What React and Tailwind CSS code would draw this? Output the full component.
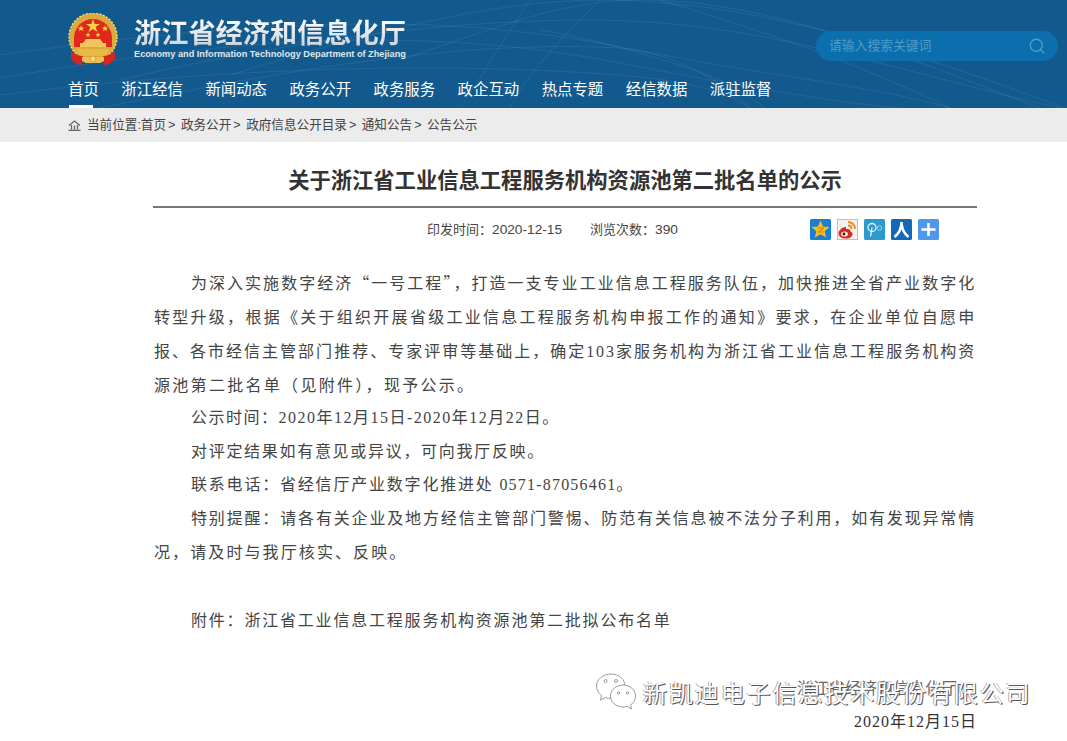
import { Search } from 'lucide-react';

const navItems = ['首页', '浙江经信', '新闻动态', '政务公开', '政务服务', '政企互动', '热点专题', '经信数据', '派驻监督'];
const crumbs = ['政务公开', '政府信息公开目录', '通知公告', '公告公示'];

/* ---------- drawn pieces ---------- */
function Emblem() {
  return (
    <svg width="50" height="53" viewBox="0 0 50 53" className="shrink-0">
      <circle cx="25" cy="24" r="24" fill="#dca93c" />
      <circle cx="25" cy="24" r="24" fill="none" stroke="#f3d77f" strokeWidth="1.5" strokeDasharray="2 1.5" />
      <path d="M6 25a19 19 0 1 1 38 0v9H6z" fill="#e0281d" />
      <path d="M25 6l1.7 5h5.3l-4.3 3 1.6 5-4.3-3.1-4.3 3.1 1.6-5-4.3-3h5.3z" fill="#f8d24a" />
      <path d="M13 12l.9 2.4h2.5l-2 1.5.8 2.4-2.2-1.5-2.1 1.5.8-2.4-2-1.5h2.5zM37 12l.9 2.4h2.5l-2 1.5.8 2.4-2.2-1.5-2.1 1.5.8-2.4-2-1.5h2.5zM20 19l.7 1.9h2l-1.6 1.2.6 2-1.7-1.2-1.7 1.2.6-2-1.6-1.2h2zM30 19l.7 1.9h2l-1.6 1.2.6 2-1.7-1.2-1.7 1.2.6-2-1.6-1.2h2z" fill="#f8d24a" />
      <path d="M15 30l3-4h14l3 4zM12 34h26v-4H12z" fill="#f0c65a" />
      <path d="M8 36h34l-4 7H12z" fill="#e8b945" />
      <path d="M3 38c4 3 8 5 12 5l-1 9c-5 0-9-3-11-7zM47 38c-4 3-8 5-12 5l1 9c5 0 9-3 11-7z" fill="#d9251c" />
      <path d="M14 44h22v4l-4 2H18l-4-2z" fill="#edc050" />
      <circle cx="25" cy="46" r="3" fill="#f3d77f" stroke="#c6902c" strokeWidth=".7" />
    </svg>
  );
}

function HeaderLines() {
  return (
    <svg className="absolute inset-0 h-full w-full" viewBox="0 0 1067 108" preserveAspectRatio="none" fill="none" stroke="#ffffff" strokeOpacity=".07">
      <path d="M0 78c180-30 390-60 620-15 130 25 220 40 280 45" />
      <path d="M0 55c180-25 400-50 610-10 150 30 260 40 340 63" />
      <path d="M120 80c170-40 330-60 470-60 170 0 300 50 470 88" />
      <path d="M230 75c130-40 260-75 370-75 150 0 310 50 465 108" />
      <path d="M400 60c90-30 160-60 240-60 130 0 260 55 400 108" />
      <path d="M100 108c150-30 350-70 520-60 60 5 110 40 130 60" />
      <path d="M540 30c60 10 130 30 180 50 20 10 35 20 45 28" />
      <path d="M0 95c200-25 420-35 620-20 60 5 105 15 130 33" />
      <path d="M530 0c-40 60-50 80-70 108M600 0c-40 40-70 70-90 108M660 0c100 30 190 60 290 108" />
    </svg>
  );
}

function ShareIcons() {
  return (
    <div className="-mt-[1px] flex gap-[6px]">
      <svg width="21" height="21" viewBox="0 0 21 21">
        <rect width="21" height="21" rx="1.5" fill="#1b7fd1" />
        <path d="M10.5 1.5l2.6 6 6.4.6-4.8 4.2 1.4 6.2-5.6-3.3-5.6 3.3 1.4-6.2L1.500 8.100l6.400-.6z" fill="#f8bd1b" />
        <path d="M7.500 9h6l-5 4h5" fill="none" stroke="#d98a10" strokeWidth="1.200" />
      </svg>
      <svg width="21" height="21" viewBox="0 0 21 21">
        <rect width="21" height="21" rx="1.5" fill="#f4f1ee" stroke="#d8503f" strokeWidth=".8" />
        <path d="M9 8C5 8 1.500 11.500 1.500 14.500S5 19.500 9 19.500s6.500-2 6.500-4.500c0-2-2-2-2-2.500 0-1.500-.5-3-4.500-2.500 0-1 0-2-.0-2z" fill="#d9281e" />
        <ellipse cx="7.500" cy="15" rx="3.400" ry="2.600" fill="#f6e9e4" />
        <circle cx="7" cy="15" r="1.400" fill="#222222" />
        <path d="M11 3c4 0 7 3 7 7M11 6.500c2 0 3.500 1.500 3.500 3.500" fill="none" stroke="#f08a1c" strokeWidth="1.800" />
      </svg>
      <svg width="21" height="21" viewBox="0 0 21 21">
        <rect width="21" height="21" rx="1.5" fill="#2c9bcb" />
        <circle cx="8" cy="8.500" r="4" fill="none" stroke="#e4f4fb" strokeWidth="1.300" />
        <path d="M6.500 17.500L8 8.500" stroke="#e4f4fb" strokeWidth="1.300" />
        <circle cx="15.500" cy="9" r="2.200" fill="none" stroke="#9fd3ea" strokeWidth="1" />
      </svg>
      <svg width="21" height="21" viewBox="0 0 21 21">
        <rect width="21" height="21" rx="1.5" fill="#1468b8" />
        <path d="M10.500 3c0 6-2 11-7 15M10.500 3c0 6 2 11 7 15" fill="none" stroke="#ffffff" strokeWidth="2.600" />
      </svg>
      <svg width="21" height="21" viewBox="0 0 21 21">
        <rect width="21" height="21" rx="1.5" fill="#4f97ea" />
        <path d="M10.500 4v13M3.500 10.500h14" stroke="#ffffff" strokeWidth="2.600" />
      </svg>
    </div>
  );
}

function WechatMark() {
  return (
    <svg width="42" height="38" viewBox="0 0 42 38" fill="none" stroke="#9a9a9a" strokeWidth="1">
      <path d="M16 1C8 1 1.500 6.500 1.500 13c0 4 2 7 5 9.500L5.500 27l5-2.500c1.500.5 3.500.8 5.500.8 9 0 14-6 14-12.300S24 1 16 1z" fill="#ffffff" />
      <path d="M28 12c-7 0-12.500 5-12.500 11S21 34 28 34c1.500 0 3-.2 4-.6l4.500 2.600-1-4c3-2 5-5 5-9 0-6-5.500-11-12.500-11z" fill="#ffffff" />
      <circle cx="10.500" cy="8" r="1.500" />
      <circle cx="21" cy="8" r="1.500" />
      <circle cx="23.500" cy="20" r="1.200" />
      <circle cx="32.500" cy="20" r="1.200" />
    </svg>
  );
}

/* ---------- body lines, broken as in the original ---------- */
const LINE = 'block leading-[34px] [text-align:justify] [text-align-last:justify]';
const PLAIN = 'block leading-[33.6px] pl-[37px]';
const CJK = "font-['Noto_Sans_CJK_SC',sans-serif]";

export default function App() {
  return (
    <div className="relative h-[741px] w-[1067px] overflow-hidden bg-white font-['Liberation_Sans','Noto_Sans_CJK_SC',sans-serif] text-[#333]">
      {/* ---- header ---- */}
      <header className="relative h-[108px] bg-[#125a8e] text-white">
        <HeaderLines />
        <div className="relative flex h-[77px] items-center justify-between pl-[68px] pr-[9px]">
          <div className="flex items-center gap-4 pt-[1px]">
            <Emblem />
            <div className="w-[274px]">
              <div className="bg-gradient-to-b from-white to-[#c4ced6] bg-clip-text text-[27.2px] font-bold leading-[32px] text-transparent">
                浙江省经济和信息化厅
              </div>
              <div className="-mt-[2px] whitespace-nowrap text-[9.2px] font-bold leading-[12px] text-[#dfe6ec]">
                Economy and Information Technology Department of Zhejiang
              </div>
            </div>
          </div>
          <div className="mt-[15px] flex h-[30px] w-[242px] items-center justify-between rounded-full bg-[#0b6fae] pl-[13px] pr-[12px]">
            <span className="text-[12.8px] text-[#4f9cc6]">请输入搜索关键词</span>
            <Search size={18} strokeWidth={1.7} className="text-[#4f9cc6]" />
          </div>
        </div>
        <nav className="relative flex h-[31px] gap-[22.5px] pl-[68px]">
          {navItems.map((item, i) => (
            <a key={item} className="relative text-[15.4px] leading-[25px]">
              {item}
              {i === 0 && <span className="absolute bottom-0 left-[1px] h-[3px] w-[24px] bg-white" />}
            </a>
          ))}
        </nav>
      </header>

      {/* ---- breadcrumb ---- */}
      <div className="flex h-[34px] items-center bg-[#ececec] pl-[68px] text-[12.6px] text-[#444]">
        <svg width="13" height="11" viewBox="0 0 13 11" fill="none" stroke="#666666" strokeWidth="1.300" className="mr-[6px]">
          <path d="M1 5.500L6.500 1 12 5.500M3.500 5v4.500M9.500 5v4.500M6.500 5.500v4M.5 10.500h12" />
        </svg>
        <span>当前位置:首页</span>
        {crumbs.map((c) => (
          <span key={c}>
            <span className="mx-[2px]">&gt;</span> {c}
          </span>
        ))}
      </div>

      {/* ---- article ---- */}
      <main className="mx-[153px] w-[824px]">
        <h1 className="border-b-2 border-[#777] pb-[9px] pt-[24px] text-center text-[21.3px] font-bold leading-[31px] text-[#333]">
          关于浙江省工业信息工程服务机构资源池第二批名单的公示
        </h1>
        <div className="flex h-[44px] items-center pl-[274px] text-[13px] text-[#444]">
          <span className="w-[163px]">
            <span className={CJK}>印发时间：</span>
            <span className="text-[13.7px]">2020-12-15</span>
          </span>
          <span className="w-[220px]">
            <span className={CJK}>浏览次数：</span>
            <span className="text-[13.7px]">390</span>
          </span>
          <ShareIcons />
        </div>
        <div className="mt-[13px] pl-[1px] pr-[1px] font-['Liberation_Serif','Noto_Sans_CJK_SC',serif] text-[16px] tracking-[1.8px] text-[#444]">
          <span className={`${LINE} pl-[37px]`}>
            为深入实施数字经济<span className={CJK}>“</span>一号工程<span className={CJK}>”</span>，打造一支专业工业信息工程服务队伍，加快推进全省产业数字化
          </span>
          <span className={LINE}>转型升级，根据《关于组织开展省级工业信息工程服务机构申报工作的通知》要求，在企业单位自愿申</span>
          <span className={LINE}>报、各市经信主管部门推荐、专家评审等基础上，确定103家服务机构为浙江省工业信息工程服务机构资</span>
          <span className="block leading-[34px] tracking-[2.3px]">源池第二批名单（见附件），现予公示。</span>
          <div className="-mt-[2px]">
            <span className={`${PLAIN} tracking-[1.5px]`}>公示时间：2020年12月15日-2020年12月22日。</span>
            <span className={`${PLAIN} tracking-[1.7px]`}>对评定结果如有意见或异议，可向我厅反映。</span>
            <span className={PLAIN}>
              联系电话：省经信厅产业数字化推进处 <span className="tracking-[1.2px]">0571-87056461</span>。
            </span>
            <span className={`${LINE} pl-[37px]`}>特别提醒：请各有关企业及地方经信主管部门警惕、防范有关信息被不法分子利用，如有发现异常情</span>
            <span className="block leading-[34px] tracking-[2.1px]">况，请及时与我厅核实、反映。</span>
            <span className="block h-[34px]" />
            <span className={PLAIN}>附件：浙江省工业信息工程服务机构资源池第二批拟公布名单</span>
          </div>
        </div>
      </main>

      {/* ---- text under the watermark ---- */}
      <div className="absolute left-[797px] top-[675px] font-['Noto_Sans_CJK_SC',sans-serif] text-[16px] text-[#666]">浙江省经济和信息化厅</div>
      <div className="absolute right-[90px] top-[710px] font-['Liberation_Serif','Noto_Sans_CJK_SC',serif] text-[16px] tracking-[1px] text-[#333]">2020年12月15日</div>

      {/* ---- watermark over the page ---- */}
      <div className="absolute left-[595px] top-[673px] flex items-center gap-[6px]">
        <WechatMark />
        <span className="font-['Noto_Sans_CJK_SC',sans-serif] text-[24px] tracking-[1.9px] text-white [text-shadow:1px_1px_0_#555,-1px_0_0_#aaa]">
          新凯迪电子信息技术股份有限公司
        </span>
      </div>
    </div>
  );
}
